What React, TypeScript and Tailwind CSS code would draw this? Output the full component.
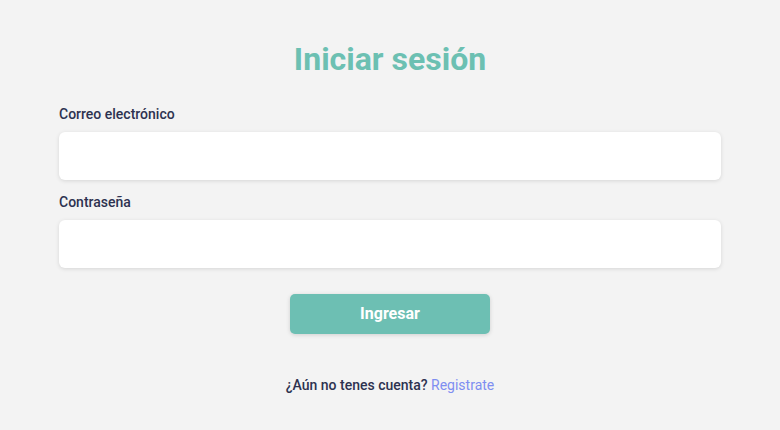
import React from "react";

export default function App() {
  return (
    <div className="min-h-[430px] w-full bg-[#f3f3f3] font-['Roboto',sans-serif]">
      <div className="mx-auto w-[662px] pt-[39px]">
        <h1 className="text-center text-[32px] leading-[40px] font-bold text-[#6cc0b2]">Iniciar sesión</h1>
        <div className="mt-[25px]">
          <label className="block text-[14px] leading-[20px] font-medium text-[#2d3250]">Correo electrónico</label>
          <input type="email" className="mt-2 block h-[48px] w-full rounded-[6px] bg-white shadow-[0_1px_4px_rgba(0,0,0,0.12)] outline-none" />
        </div>
        <div className="mt-3">
          <label className="block text-[14px] leading-[20px] font-medium text-[#2d3250]">Contraseña</label>
          <input type="password" className="mt-2 block h-[48px] w-full rounded-[6px] bg-white shadow-[0_1px_4px_rgba(0,0,0,0.12)] outline-none" />
        </div>
        <div className="mt-[26px] flex justify-center">
          <button className="h-[40px] w-[200px] rounded-[5px] bg-[#6dbfb3] text-[16px] font-bold text-white shadow-[0_1px_4px_rgba(0,0,0,0.15)]">Ingresar</button>
        </div>
        <p className="mt-[41px] text-center text-[14px] leading-[20px] font-medium text-[#2d3250]">
          ¿Aún no tenes cuenta? <a className="font-normal text-[#7e8ef1]">Registrate</a>
        </p>
      </div>
    </div>
  );
}
